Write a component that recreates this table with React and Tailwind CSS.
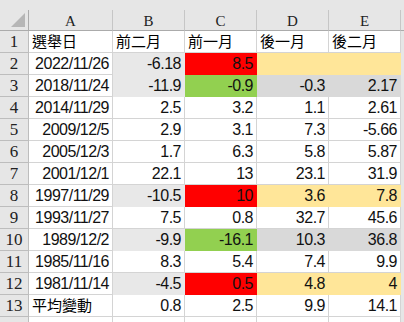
const RED = 'bg-[#ff0000] border-[#ff0000]';
const GREEN = 'bg-[#92d050] border-[#92d050]';
const YELLOW = 'bg-[#ffe699] border-[#ffe699]';
const GRAY = 'bg-[#d9d9d9] border-[#d9d9d9]';
const LIGHT = 'bg-[#e8e8e8] border-[#e8e8e8]';

const rows = [
  { cells: ['選舉日', '前二月', '前一月', '後一月', '後二月'], text: true },
  { cells: ['2022/11/26', '-6.18', '8.5', '', ''], fills: [null, LIGHT, RED, YELLOW, YELLOW] },
  { cells: ['2018/11/24', '-11.9', '-0.9', '-0.3', '2.17'], fills: [null, LIGHT, GREEN, GRAY, GRAY] },
  { cells: ['2014/11/29', '2.5', '3.2', '1.1', '2.61'] },
  { cells: ['2009/12/5', '2.9', '3.1', '7.3', '-5.66'] },
  { cells: ['2005/12/3', '1.7', '6.3', '5.8', '5.87'] },
  { cells: ['2001/12/1', '22.1', '13', '23.1', '31.9'] },
  { cells: ['1997/11/29', '-10.5', '10', '3.6', '7.8'], fills: [null, LIGHT, RED, YELLOW, YELLOW] },
  { cells: ['1993/11/27', '7.5', '0.8', '32.7', '45.6'] },
  { cells: ['1989/12/2', '-9.9', '-16.1', '10.3', '36.8'], fills: [null, LIGHT, GREEN, GRAY, GRAY] },
  { cells: ['1985/11/16', '8.3', '5.4', '7.4', '9.9'] },
  { cells: ['1981/11/14', '-4.5', '0.5', '4.8', '4'], fills: [null, LIGHT, RED, YELLOW, YELLOW] },
  { cells: ['平均變動', '0.8', '2.5', '9.9', '14.1'], firstText: true },
];

const cellFont = { fontFamily: '"Liberation Sans", "Noto Sans CJK TC", sans-serif' };
const headFont = { fontFamily: '"Liberation Serif", serif' };

function RowHead({ n, h = 'h-[22px]' }) {
  return (
    <div className={`${h} bg-[#e6e6e6] border-r border-b border-[#bdbdbd] flex items-end justify-center text-[17px] leading-[20px] text-[#222] overflow-hidden`} style={headFont}>
      {n}
    </div>
  );
}

function Cell({ value, fill, left }) {
  const cls = fill ?? 'bg-white border-[#d4d4d4]';
  const isCjk = /[\u4e00-\u9fff]/.test(value);
  return (
    <div className={`h-[22px] border-r border-b ${cls} flex items-end ${left ? 'justify-start pl-[3px]' : 'justify-end pr-[3px]'} overflow-hidden`}>
      <span
        className={isCjk ? 'text-[15px] leading-[21px] text-black' : 'text-[16px] leading-[20px] tracking-[-0.5px] text-[#111]'}
        style={cellFont}
      >
        {value}
      </span>
    </div>
  );
}

export default function App() {
  return (
    <div className="w-[404px] h-[322px] overflow-hidden bg-[#e6e6e6]">
      <div className="h-[10px] bg-[#e6e6e6]" />
      <div className="grid grid-cols-[29px_84px_72px_72px_72px_72px_3px]">
        {/* column headers */}
        <div className="h-[21px] border-r border-b border-[#ababab] bg-[#e6e6e6] relative">
          <svg width="14" height="14" className="absolute left-[11px] top-[3px]">
            <polygon points="14,0 14,14 0,14" fill="#b6b6b6" />
          </svg>
        </div>
        {['A', 'B', 'C', 'D', 'E'].map((c) => (
          <div key={c} className="h-[21px] border-r border-b border-r-[#c6c6c6] border-b-[#ababab] bg-[#e6e6e6] flex items-center justify-center text-[15px] text-[#222] pt-[2px]" style={headFont}>
            {c}
          </div>
        ))}
        <div className="h-[21px] border-b border-[#ababab] bg-[#e6e6e6]" />

        {rows.map((r, i) => (
          <div key={i} className="contents">
            <RowHead n={i + 1} />
            {r.cells.map((v, j) => (
              <Cell
                key={j}
                value={v}
                fill={r.fills?.[j]}
                left={r.text || (r.firstText && j === 0)}
              />
            ))}
            <div className="h-[22px] bg-[#e6e6e6]" />
          </div>
        ))}

        <RowHead n="" h="h-[6px]" />
        {[0, 1, 2, 3, 4].map((j) => (
          <div key={j} className="h-[6px] bg-white border-r border-[#d4d4d4]" />
        ))}
        <div className="h-[6px] bg-[#e6e6e6]" />
      </div>
    </div>
  );
}
